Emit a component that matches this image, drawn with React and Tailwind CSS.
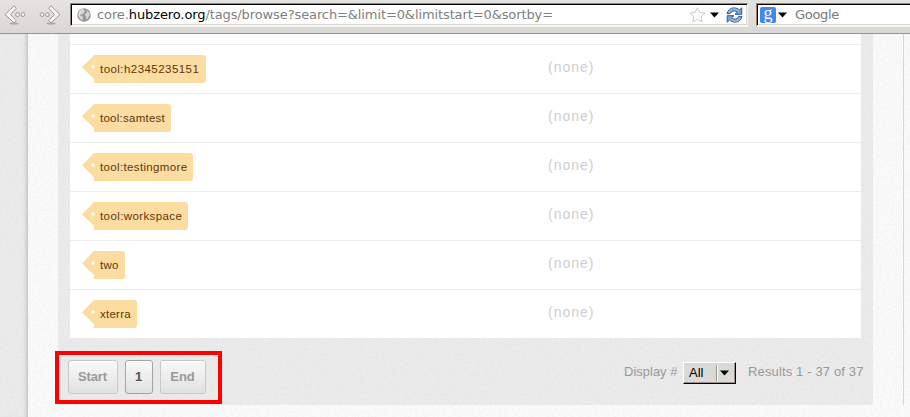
import React from "react";

const tags = [
  { name: "tool:h2345235151", width: "w-[112px]", tracking: "tracking-[0.45px]" },
  { name: "tool:samtest", width: "w-[77px]", tracking: "tracking-[0.25px]" },
  { name: "tool:testingmore", width: "w-[99px]", tracking: "tracking-[0.35px]" },
  { name: "tool:workspace", width: "w-[94px]", tracking: "tracking-[0.4px]" },
  { name: "two", width: "w-[31px]", tracking: "tracking-[0.3px]" },
  { name: "xterra", width: "w-[43px]", tracking: "tracking-[0.25px]" },
];

function Grain() {
  return (
    <svg className="absolute inset-0 h-full w-full opacity-[0.07]" aria-hidden="true">
      <filter id="grain">
        <feTurbulence type="fractalNoise" baseFrequency="0.4" numOctaves="2" />
        <feColorMatrix type="matrix" values="0 0 0 0 0.4  0 0 0 0 0.4  0 0 0 0 0.4  2.4 0 0 0 -0.9" />
      </filter>
      <rect width="100%" height="100%" filter="url(#grain)" />
    </svg>
  );
}

function NavArrow({ flip }) {
  return (
    <svg width="22" height="20" viewBox="0 0 22 20" className={flip ? "-scale-x-100" : ""}>
      <ellipse cx="10" cy="18.4" rx="4.5" ry="1" fill="#8b8b86" opacity="0.6" />
      <path d="M10.2 .8 L1 9.5 L10.2 18 L12.3 15.6 L6.5 9.5 L12.3 3.2 Z" fill="#f6f6f4" stroke="#9a9a96" strokeWidth="1" strokeLinejoin="round" />
      <circle cx="13.6" cy="9.6" r="1.9" fill="#f3f3f1" stroke="#91918d" strokeWidth="0.9" />
      <circle cx="19" cy="9.6" r="1.9" fill="#f3f3f1" stroke="#91918d" strokeWidth="0.9" />
    </svg>
  );
}

function Globe() {
  return (
    <svg width="14" height="14" viewBox="0 0 14 14">
      <circle cx="7" cy="7" r="6.8" fill="#9a9a9a" />
      <path d="M2 3.5 L4.5 1.3 L7 1 L6.5 2.5 L8 3.2 L6.4 4.8 L5.6 6.5 L3.8 6 L3 7.5 L5 8.2 L6 10 L4.8 12.5 L2.5 9.8 L1.2 7.5 Z" fill="#dcdcdc" />
      <path d="M9 2 L12 4.2 L13 7 L11.7 8.4 L10.7 11 L9.2 10.6 L8.8 8.2 L7.6 6.8 L9 5.2 L10.3 4.3 Z" fill="#d6d6d6" />
    </svg>
  );
}

function Reload() {
  return (
    <svg width="17" height="16" viewBox="0 0 17 16" strokeLinejoin="round">
      <path d="M1 6.6 C2 2.8 4.5 .9 8 .9 C10.2 .9 12 1.7 13.4 3 L15.8 .8 L15.8 7.3 L9 7.3 L11.3 5.1 C9 3.2 6 3.6 4.3 6.6 Z" fill="#7ca3d2" stroke="#2d5b93" />
      <path d="M16 9.4 C15 13.2 12.5 15.1 9 15.1 C6.8 15.1 5 14.3 3.6 13 L1.2 15.2 L1.2 8.7 L8 8.7 L5.7 10.9 C8 12.8 11 12.4 12.7 9.4 Z" fill="#7ca3d2" stroke="#2d5b93" />
      <path d="M2.8 5 C4.7 1.5 9.6 1 12.5 4 M14.2 11 C12.3 14.5 7.4 15 4.5 12" fill="none" stroke="#b8d0eb" strokeWidth="0.9" />
    </svg>
  );
}

function Caret({ className = "" }) {
  return (
    <svg width="9" height="6" viewBox="0 0 9 6" className={"shrink-0 " + className}>
      <path d="M0 .5 H9 L4.5 5.5 Z" fill="#000" />
    </svg>
  );
}

function Toolbar() {
  return (
    <header className="relative flex h-[34px] shrink-0 items-start border-b border-[#9c918d] bg-linear-to-b from-[#e5e3e1] to-[#d9d8d3] font-['DejaVu_Sans',sans-serif] text-[13px]">
      <div className="flex w-[70px] gap-[13px] pt-[5px] pl-1">
        <NavArrow />
        <NavArrow flip />
      </div>
      <div className="mt-[3px] flex h-6 w-[678px] items-center border-t border-r border-b-2 border-l border-t-[#8f8580] border-r-[#f5f5f3] border-b-[#f5f5f3] border-l-[#8f8580] bg-white shadow-[inset_1px_1px_0_#000,inset_-1px_-1px_0_#d9d8d3]">
        <div className="ml-1.5 flex w-5"><Globe /></div>
        <p className="w-[592px] pt-px tracking-[-0.105px] whitespace-nowrap text-[#808080]">
          <span>core.</span><span className="text-black">hubzero.org</span><span>/tags/browse?search=&amp;limit=0&amp;limitstart=0&amp;sortby=</span>
        </p>
        <svg width="17" height="16" viewBox="0 0 17 16" className="shrink-0">
          <path d="M8.5 .8 L10.8 5.4 L16 6.1 L12.2 9.6 L13.2 14.8 L8.5 12.4 L3.8 14.8 L4.8 9.6 L1 6.1 L6.2 5.4 Z" fill="#fff" stroke="#cacaca" strokeLinejoin="round" />
        </svg>
        <Caret className="ml-1" />
        <div className="ml-[7px]"><Reload /></div>
      </div>
      <div className="mt-[3px] ml-[8px] flex h-6 w-[154px] items-center border-t border-b-2 border-l border-t-[#8f8580] border-b-[#f5f5f3] border-l-[#8f8580] bg-white shadow-[inset_1px_1px_0_#000,inset_0_-1px_0_#d9d8d3]">
        <span className="ml-[3px] flex h-4 w-4 shrink-0 items-center justify-center rounded-[2px] bg-[#4285f4] pb-[3px] font-['Liberation_Serif',serif] text-[18px] leading-4 text-white">g</span>
        <Caret className="ml-[2px]" />
        <span className="ml-[8px] pt-px tracking-[-0.3px] text-[#777]">Google</span>
      </div>
    </header>
  );
}

function Tag({ name, width, tracking }) {
  return (
    <div className="flex h-7">
      <svg width="12" height="28" viewBox="0 0 12 28" className="shrink-0">
        <path d="M0 12.2 L12 0 V28 V24 Z" fill="#fbdda2" />
      </svg>
      <span className={"relative h-7 rounded-r-[3px] bg-[#fbdda2] pl-[6px] text-[11.5px] leading-[29px] whitespace-nowrap text-[#5f3405] " + width + " " + tracking}>
        <i className="absolute top-[10px] left-[-3px] h-1 w-1 rounded-full bg-[#faf6ed]" />
        {name}
      </span>
    </div>
  );
}

function PageButton({ children, className }) {
  return (
    <button className={"h-[34px] rounded-[3px] border bg-linear-to-b from-[#f9f9f9] to-[#e1e1e1] pr-px text-[13px] font-bold tracking-[-0.1px] shadow-[inset_0_1px_0_#fff] " + className}>
      {children}
    </button>
  );
}

function Pagination() {
  return (
    <div className="flex h-[67px] items-start justify-between">
      <div className="mt-[13px] -ml-[3px] flex h-[53px] w-[167px] gap-[7px] border-4 border-[#f00] pt-[5px] pl-[9px]">
        <PageButton className="w-[50px] border-[#c8c8c8] text-[#999]">Start</PageButton>
        <PageButton className="w-[28px] border-[#a4a4a4] text-[#555]">1</PageButton>
        <PageButton className="w-[46px] border-[#c8c8c8] text-[#999]">End</PageButton>
      </div>
      <div className="mt-[23px] mr-[9px] flex h-[23px] items-center text-[13px] text-[#999]">
        <span className="w-[59px] pb-px whitespace-nowrap">Display #</span>
        <div className="flex h-[22px] w-[53px] items-center border border-t-white border-r-black border-b-black border-l-white bg-[#dad9d5] pl-[5px] text-black shadow-[inset_-1px_-1px_0_#9c918d]">
          <span className="w-[27px]">All</span>
          <span className="h-4 w-[2px] border-r border-l border-r-white border-l-[#9c918d]" />
          <Caret className="ml-[2px]" />
        </div>
        <span className="ml-[12px] w-[116px] pb-px tracking-[0.14px] whitespace-nowrap">Results 1 - 37 of 37</span>
      </div>
    </div>
  );
}

export default function App() {
  return (
    <div className="flex h-[417px] w-[910px] flex-col overflow-hidden bg-[#fafafa] font-['Liberation_Sans',sans-serif]">
      <Toolbar />
      <main className="relative flex grow">
        <aside className="w-7 shrink-0 bg-[#ebebeb] shadow-[inset_-4px_0_4px_-3px_#b5b5b5]" />
        <section className="ml-[30px] h-[371px] w-[815px] shrink-0 rounded-b-[3px] bg-[#ebebeb]">
          <Grain />
          <div className="relative">
            <div className="ml-3 h-[304px] w-[791px] bg-white pt-[10px]">
              {tags.map((tag) => (
                <div key={tag.name} className="flex h-[49px] border-t border-[#ececec] pt-[10px] pl-3">
                  <div className="w-[466px]"><Tag {...tag} /></div>
                  <span className="text-[14px] leading-[25px] tracking-[1px] text-[#cecece]">(none)</span>
                </div>
              ))}
            </div>
            <Pagination />
          </div>
        </section>
        <div className="ml-[30px] h-[371px] w-px bg-[#d9d9d9]" />
      </main>
    </div>
  );
}
